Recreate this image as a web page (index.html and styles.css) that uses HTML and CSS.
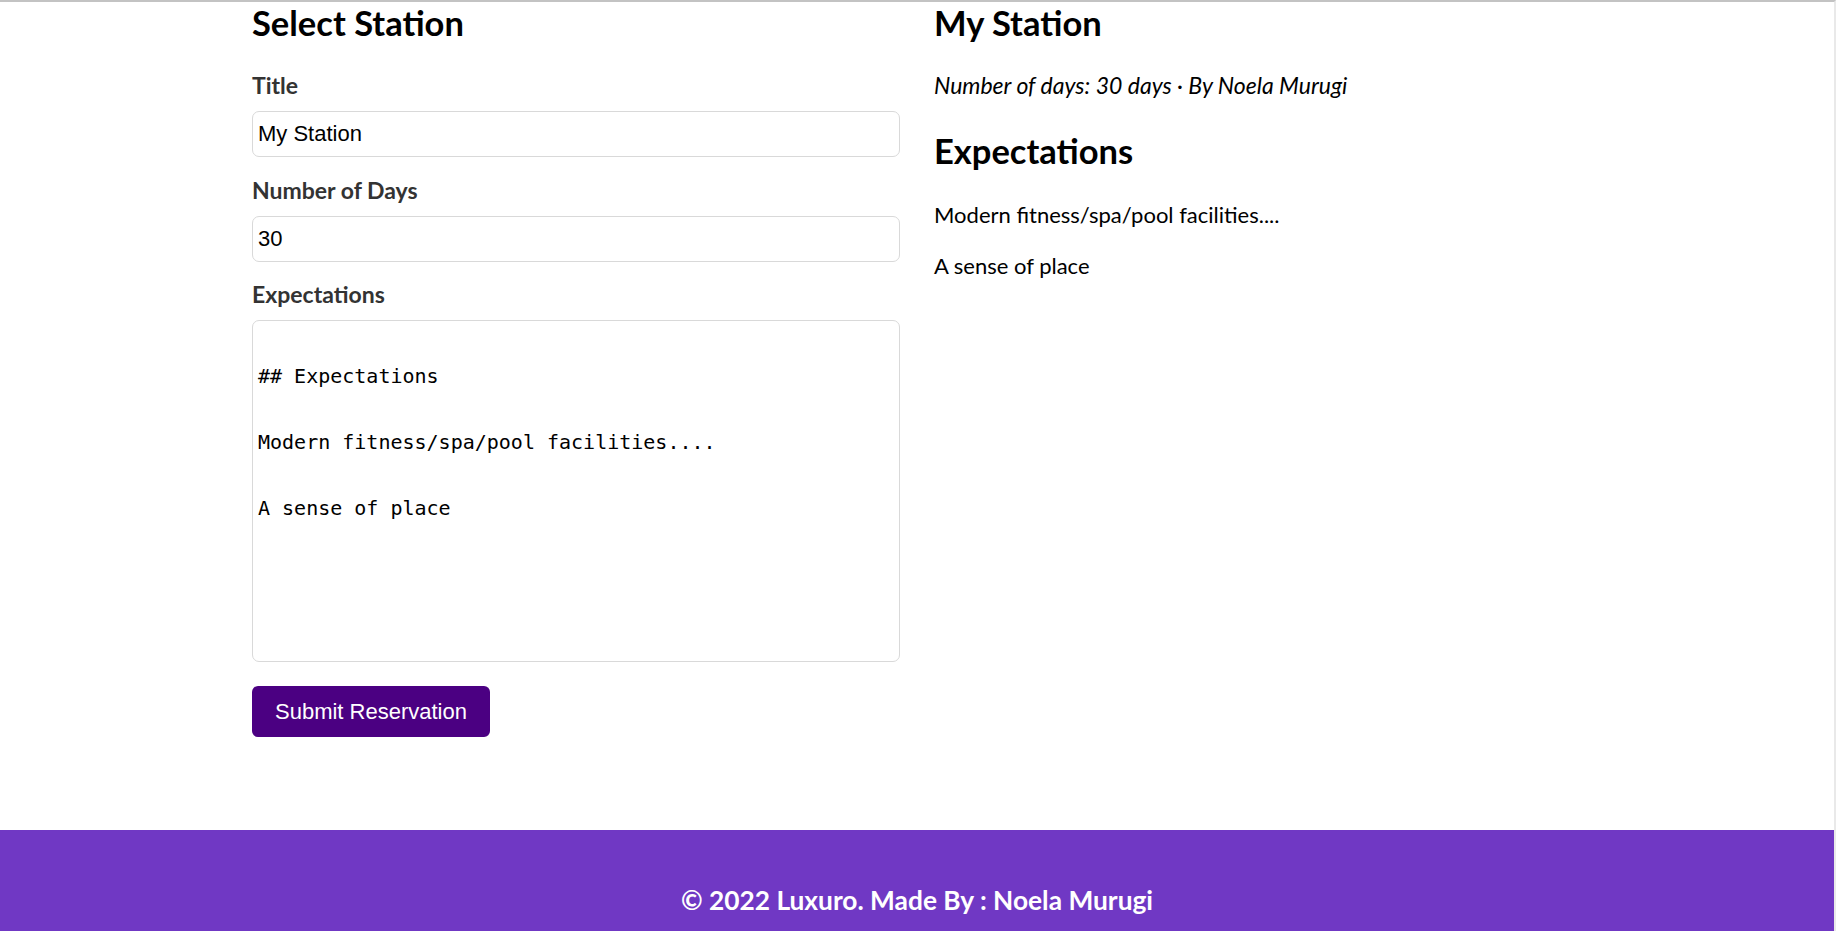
FILE: index.html
```html
<!DOCTYPE html>
<html lang="en">
<head>
  <meta charset="utf-8">
  <title>Luxuro – Select Station</title>
  <link rel="stylesheet" href="styles.css">
</head>
<body>
  <div class="frame">
    <main class="page">
      <div class="container">
        <section class="form-col">
          <h2 class="heading">Select Station</h2>
          <form class="station-form">
            <div class="field">
              <label class="field-label" for="title">Title</label>
              <input class="field-input" id="title" type="text" value="My Station">
            </div>
            <div class="field">
              <label class="field-label" for="days">Number of Days</label>
              <input class="field-input" id="days" type="text" value="30">
            </div>
            <div class="field field-last">
              <label class="field-label" for="expectations">Expectations</label>
              <textarea class="field-textarea" id="expectations">

## Expectations

Modern fitness/spa/pool facilities....

A sense of place</textarea>
            </div>
            <button class="submit-btn" type="button">Submit Reservation</button>
          </form>
        </section>
        <section class="preview-col">
          <h2 class="heading">My Station</h2>
          <p class="meta">Number of days: 30 days · By Noela Murugi</p>
          <h2 class="heading heading-sub">Expectations</h2>
          <p class="body-text body-first">Modern fitness/spa/pool facilities....</p>
          <p class="body-text">A sense of place</p>
        </section>
      </div>
    </main>
    <footer class="footer">
      <p class="footer-text">© 2022 Luxuro. Made By : Noela Murugi</p>
    </footer>
  </div>
</body>
</html>
```
FILE: styles.css
```css
* { box-sizing: border-box; }

html, body {
  margin: 0;
  padding: 0;
  background: #ffffff;
}

body {
  font-family: "Lato", "Open Sans", sans-serif;
  color: #000;
}

.frame {
  height: 931px;
  border-top: 2px solid #c3c3c3;
  border-right: 2px solid #e9e9e9;
  display: flex;
  flex-direction: column;
  overflow: hidden;
}

.page {
  flex: 1;
}

.container {
  width: 1330px;
  margin: 0 auto;
  display: grid;
  grid-template-columns: 1fr 1fr;
  column-gap: 34px;
  align-items: start;
}

.heading {
  margin: 0;
  font-size: 34.5px;
  line-height: 41.5px;
  font-weight: 700;
  color: #000;
}

/* ---------- form column ---------- */
.station-form {
  margin: 28.8px 0 0;
  display: flex;
  flex-direction: column;
  align-items: flex-start;
}

.field {
  width: 100%;
  margin-bottom: 19.5px;
}

.field-last {
  margin-bottom: 24px;
}

.field-label {
  display: block;
  font-size: 23px;
  line-height: 26px;
  font-weight: 700;
  color: #333;
  margin-bottom: 13px;
}

.field-input,
.field-textarea {
  display: block;
  width: 100%;
  border: 1px solid #d9d9d9;
  border-radius: 7px;
  background: #fff;
  color: #000;
  outline: none;
}

.field-input {
  height: 46px;
  padding: 0 6px 0 5px;
  font-family: "Liberation Sans", Arial, sans-serif;
  font-size: 22px;
}

.field-textarea {
  height: 342px;
  padding: 6px 6px 6px 5px;
  font-family: "DejaVu Sans Mono", monospace;
  font-size: 20px;
  line-height: 33px;
  resize: none;
}

.submit-btn {
  height: 51px;
  padding: 0 23px;
  border: none;
  border-radius: 6px;
  background: #4b0082;
  color: #fff;
  font-family: "Liberation Sans", Arial, sans-serif;
  font-size: 22px;
  cursor: pointer;
}

/* ---------- preview column ---------- */
.meta {
  margin: 26.8px 0 0;
  font-size: 23px;
  line-height: 30px;
  font-style: italic;
}

.heading-sub {
  margin-top: 30px;
}

.body-text {
  margin: 21.7px 0 0;
  font-size: 22px;
  line-height: 30px;
}

.body-first {
  margin-top: 28px;
}

/* ---------- footer ---------- */
.footer {
  height: 101px;
  flex-shrink: 0;
  background: #7038c4;
  padding-top: 54px;
}

.footer-text {
  margin: 0;
  text-align: center;
  color: #fff;
  font-size: 26.3px;
  line-height: 32px;
  font-weight: 700;
}
```
